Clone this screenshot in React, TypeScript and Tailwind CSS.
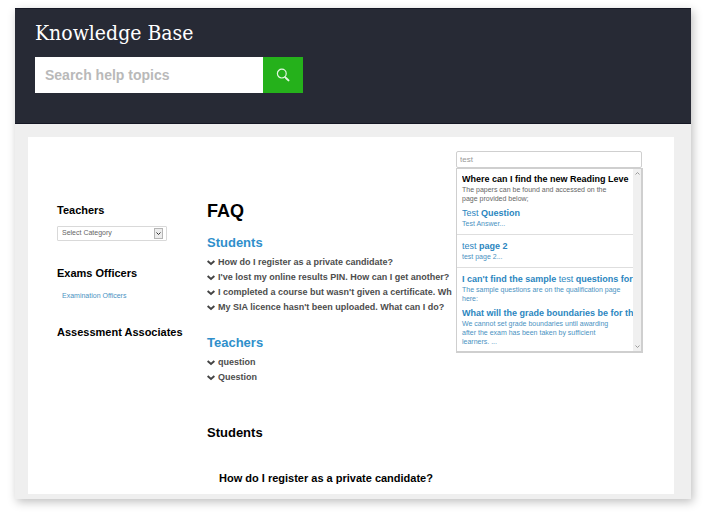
import { ReactNode } from "react";

type Result = {
  title: ReactNode;
  text: string;
  plain?: boolean;
  divider?: boolean;
};

const results: Result[] = [
  {
    title: <b>Where can I find the new Reading Leve</b>,
    text: "The papers can be found and accessed on the page provided below;",
    plain: true,
  },
  {
    title: (
      <>
        Test <b>Question</b>
      </>
    ),
    text: "Test Answer...",
    divider: true,
  },
  {
    title: (
      <>
        test <b>page 2</b>
      </>
    ),
    text: "test page 2...",
    divider: true,
  },
  {
    title: (
      <>
        <b>I can't find the sample</b> test <b>questions for</b>
      </>
    ),
    text: "The sample questions are on the qualification page here:",
  },
  {
    title: <b>What will the grade boundaries be for th</b>,
    text: "We cannot set grade boundaries until awarding after the exam has been taken by sufficient learners. ...",
  },
];

const studentQuestions = [
  "How do I register as a private candidate?",
  "I've lost my online results PIN. How can I get another?",
  "I completed a course but wasn't given a certificate. Wh",
  "My SIA licence hasn't been uploaded. What can I do?",
];

const teacherQuestions = ["question", "Question"];

const Header = () => (
  <header className="border-y border-[#151724] bg-[#272a35] px-5 pt-3 pb-[30px]">
    <h1 className="h-6 font-['DejaVu_Serif_Condensed','DejaVu_Serif',serif] text-[21px] leading-6 text-white">
      Knowledge Base
    </h1>
    <form
      className="mt-3 flex h-9 max-w-[268px]"
      onSubmit={(e) => e.preventDefault()}
    >
      <input
        type="search"
        aria-label="Search help topics"
        placeholder="Search help topics"
        className="min-w-0 flex-1 bg-white px-[10px] text-[14px] font-bold text-gray-600 outline-none placeholder:text-[#b9b9b9]"
      />
      <button
        type="submit"
        aria-label="Search"
        className="flex w-10 items-center justify-center bg-[#25b11b]"
      >
        <svg
          className="h-[14px] w-[14px]"
          viewBox="0 0 14 14"
          fill="none"
          stroke="#e4f7e2"
          strokeLinecap="round"
        >
          <circle cx="5.8" cy="5.6" r="4.4" strokeWidth="1.2" />
          <path d="M9 9l1.2 1.2" strokeWidth="1.2" />
          <path d="M10.2 10.2l2.3 2.2" strokeWidth="2" />
        </svg>
      </button>
    </form>
  </header>
);

const ScrollArrow = ({ up }: { up?: boolean }) => (
  <svg
    className="h-[5px] w-[5px]"
    viewBox="0 0 5 5"
    fill="none"
    stroke="#9a9a9a"
    strokeWidth="1"
  >
    <path d={up ? "M.5 3.5l2-2 2 2" : "M.5 1.5l2 2 2-2"} />
  </svg>
);

const SearchResults = () => (
  <div className="absolute top-full left-0 z-10 flex w-[187px] border border-r-2 border-b-2 border-[#cfcfcf] bg-white">
    <ul className="min-w-0 flex-1 pt-1 pb-[5px]">
      {results.map((result, i) => (
        <li
          key={i}
          className={
            result.divider
              ? "mb-[5px] border-b border-[#dedede] pb-[6px]"
              : "mb-1 last:mb-0"
          }
        >
          <a href="#" className="block pl-[5px]">
            <span
              className={`block overflow-hidden text-[9px] leading-3 whitespace-nowrap ${
                result.plain ? "text-black" : "text-[#2b86c0]"
              }`}
            >
              {result.title}
            </span>
            <span
              className={`block pr-[11px] text-[7px] leading-[9px] ${
                result.plain ? "text-[#666]" : "text-[#4a92c2]"
              }`}
            >
              {result.text}
            </span>
          </a>
        </li>
      ))}
    </ul>
    <div className="flex w-2 flex-col items-center justify-between bg-[#f0f0f0] py-0.5">
      <ScrollArrow up />
      <ScrollArrow />
    </div>
  </div>
);

const Sidebar = () => (
  <aside className="w-[150px] shrink-0 pt-[3px]">
    <h3 className="text-[11px] leading-4 font-bold text-black">
      <label htmlFor="category">Teachers</label>
    </h3>
    <div className="relative mt-2 h-[15px] w-[110px]">
      <select
        id="category"
        className="block h-full w-full appearance-none rounded-[1px] border border-[#d9d9d9] bg-white pl-1 text-[7px] text-[#666]"
      >
        <option>Select Category</option>
      </select>
      <span className="pointer-events-none absolute top-[2px] right-1 flex h-[11px] w-[9px] items-center justify-center border border-[#b5b5b5] bg-[#ececec]">
        <svg
          className="h-[5px] w-[5px]"
          viewBox="0 0 5 5"
          fill="none"
          stroke="#333"
        >
          <path d="M.5 1.5l2 2 2-2" />
        </svg>
      </span>
    </div>
    <h3 className="mt-6 text-[11px] leading-4 font-bold text-black">
      Exams Officers
    </h3>
    <a
      href="#"
      className="mt-[9px] block pl-[5px] text-[7px] leading-3 text-[#4a92c2]"
    >
      Examination Officers
    </a>
    <h3 className="mt-[22px] text-[11px] leading-4 font-bold text-black">
      Assessment Associates
    </h3>
  </aside>
);

const QuestionList = ({ questions }: { questions: string[] }) => (
  <ul className="mt-0.5">
    {questions.map((question) => (
      <li key={question}>
        <a
          href="#"
          className="flex h-[15px] items-center gap-[3px] text-[9px] leading-[15px] font-bold whitespace-nowrap text-[#4d4d4d]"
        >
          <svg
            className="h-2 w-2 shrink-0"
            viewBox="0 0 8 8"
            fill="none"
            stroke="#444"
            strokeWidth="2"
          >
            <path d="M.6 2L4 5l3.4-3" />
          </svg>
          {question}
        </a>
      </li>
    ))}
  </ul>
);

const Faq = () => (
  <main className="min-w-0 flex-1">
    <h2 className="text-[18px] leading-6 font-bold text-black">FAQ</h2>
    <h3 className="mt-[10px] text-[13px] leading-5 font-bold text-[#2f8fcb]">
      Students
    </h3>
    <QuestionList questions={studentQuestions} />
    <h3 className="mt-[18px] text-[13px] leading-5 font-bold text-[#2f8fcb]">
      Teachers
    </h3>
    <QuestionList questions={teacherQuestions} />
    <h3 className="mt-[38px] text-[13px] leading-5 font-bold text-black">
      Students
    </h3>
    <h4 className="mt-[27px] pl-3 text-[11px] leading-4 font-bold text-black">
      How do I register as a private candidate?
    </h4>
  </main>
);

export default function App() {
  return (
    <div className="bg-white pt-2 pr-[17px] pb-[18px] pl-[15px] font-['Liberation_Sans',Arial,sans-serif]">
      <div className="bg-[#efefef] pb-[5px] shadow-[2px_3px_9px_rgba(0,0,0,0.25)]">
        <Header />
        <div className="mt-[13px] mr-[17px] ml-[13px] bg-white pb-2 pl-[29px]">
          <div className="flex justify-end pt-[14px] pr-8">
            <div className="relative w-[186px]">
              <input
                type="text"
                aria-label="Search the FAQ"
                defaultValue="test"
                className="block h-[17px] w-full rounded-[2px] border border-[#cfcfcf] bg-white px-[3px] text-[8px] text-[#999] outline-none"
              />
              <SearchResults />
            </div>
          </div>
          <div className="mt-[31px] flex">
            <Sidebar />
            <Faq />
          </div>
        </div>
      </div>
    </div>
  );
}
